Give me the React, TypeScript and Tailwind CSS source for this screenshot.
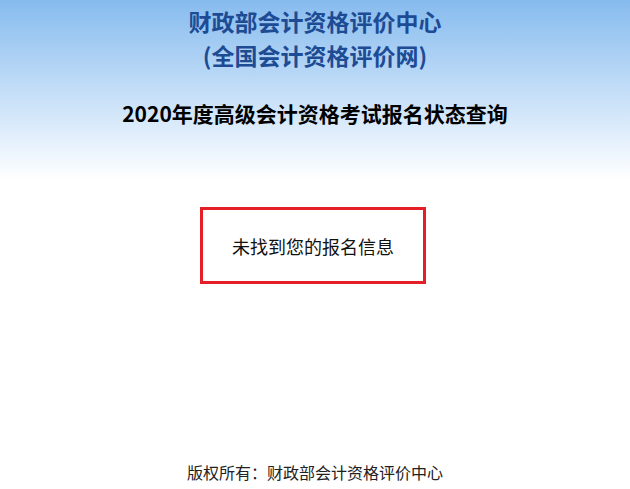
import React from 'react';

const font = { fontFamily: '"Microsoft YaHei", "Noto Sans CJK SC", "Noto Sans", sans-serif' };

export default function App() {
  return (
    <div className="min-h-[489px] w-full bg-white" style={font}>
      <div className="flex h-[180px] flex-col items-center bg-gradient-to-b from-[#86bbee] to-white pt-[4px]">
        <h1 className="text-center text-[23px] font-bold leading-[34px] text-[#1d4b94]">
          财政部会计资格评价中心
          <br />
          (全国会计资格评价网)
        </h1>
        <h2 className="mt-[26px] text-center text-[21px] font-bold leading-[30px] text-black">
          2020年度高级会计资格考试报名状态查询
        </h2>
      </div>
      <div className="mt-[27px] flex justify-center pr-[4px]">
        <div className="flex h-[77px] w-[226px] items-center justify-center border-[3px] border-[#e41f26] pt-[2px] text-[18px] text-[#111]">
          未找到您的报名信息
        </div>
      </div>
      <footer className="mt-[176px] text-center text-[16px] leading-[24px] text-[#222]">
        版权所有：财政部会计资格评价中心
      </footer>
    </div>
  );
}
